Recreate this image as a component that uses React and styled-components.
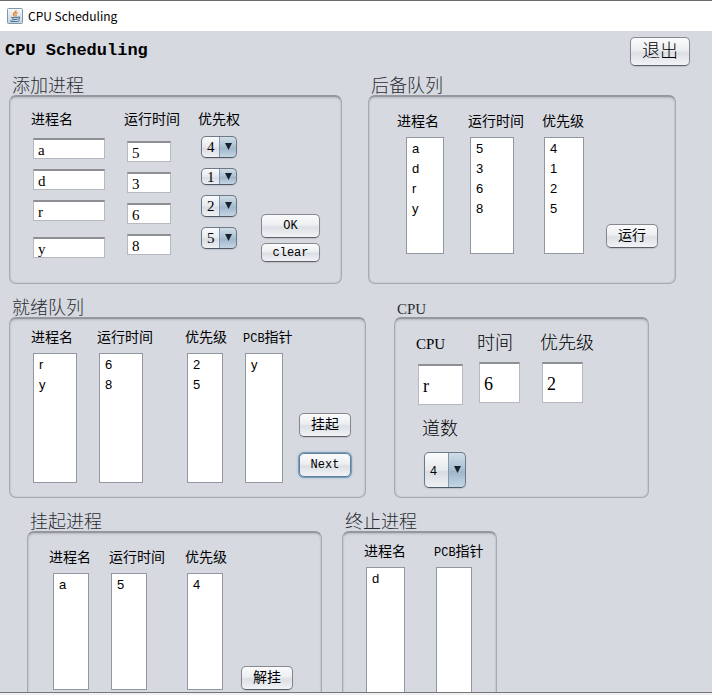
import React, { useState } from "react";
import styled, { createGlobalStyle, css } from "styled-components";

const GlobalStyle = createGlobalStyle`
  *, *::before, *::after { box-sizing: border-box; }
  body {
    margin: 0;
    overflow: hidden;
    background: #d6d9e0;
    color: #000;
    font-family: "Noto Sans CJK SC", sans-serif;
  }
  h1, h2, ul { margin: 0; padding: 0; }
  button, input, select { margin: 0; color: inherit; }
`;

const serif = css`
  font-family: "Liberation Serif", "Noto Sans CJK SC", serif;
`;

const mono = css`
  font-family: "Liberation Mono", "Noto Sans CJK SC", monospace;
`;

const Window = styled.div`
  display: flex;
  flex-direction: column;
  height: 100vh;
  border-top: 1px solid #6c6a6e;
  background: #d6d9e0;
`;

const TitleBar = styled.header`
  display: flex;
  flex: none;
  align-items: center;
  gap: 5px;
  height: 30px;
  padding-left: 7px;
  background: #fff;
  font-family: "Noto Sans CJK SC", sans-serif;
  font-size: 12px;
  line-height: 18px;
`;

const Content = styled.main`
  flex: 1;
  min-height: 0;
  overflow: hidden;
`;

const BottomEdge = styled.footer`
  flex: none;
  height: 3px;
  border-top: 1px solid #77757a;
  background: #f0f0f2;
`;

const Heading = styled.div`
  display: flex;
  align-items: flex-start;
  justify-content: space-between;
  padding: 6px 22px 9px 5px;
`;

const AppName = styled.h1`
  ${mono}
  font-size: 17px;
  font-weight: 700;
  line-height: 28px;
`;

const PanelRow = styled.div`
  display: grid;
  grid-template-columns: ${(p) => p.$columns};
  column-gap: ${(p) => p.$gap}px;
  margin-bottom: 13px;
  padding: 0 ${(p) => p.$right}px 0 ${(p) => p.$left}px;
`;

const Group = styled.section`
  display: flex;
  flex-direction: column;
  min-width: 0;
`;

const GroupTitle = styled.h2`
  height: 20px;
  padding-left: 3px;
  color: #2b2d32;
  font-size: 18px;
  font-weight: 300;
  line-height: 18px;
  white-space: nowrap;
`;

const GroupBox = styled.div`
  display: grid;
  flex: 1;
  grid-template-columns: ${(p) => p.$columns};
  min-height: ${(p) => p.$height}px;
  padding: ${(p) => p.$pad};
  border: 1px solid #a6a9b0;
  border-top: 2px solid #94979d;
  border-radius: 7px;
  box-shadow: inset 0 1px 2px #b8bbc2, inset 0 0 2px #b4b7be;
`;

const Column = styled.div`
  display: flex;
  flex-direction: column;
  align-items: flex-start;
  gap: ${(p) => p.$gap}px;
  min-width: 0;
`;

const ColumnBody = styled.div`
  display: grid;
  align-items: start;
  grid-template-rows: ${(p) => p.$rows || "auto"};
  padding-left: ${(p) => (p.$indent === undefined ? 2 : p.$indent)}px;
`;

const Caption = styled.label`
  height: 20px;
  font-size: ${(p) => (p.$large ? 18 : 14)}px;
  font-weight: ${(p) => (p.$large ? 300 : 400)};
  line-height: 18px;
  white-space: nowrap;
`;

const ListCaption = styled(Caption).attrs({ as: "span" })``;

const Latin = styled.span`
  ${(p) => (p.$large ? serif : mono)}
  font-size: ${(p) => (p.$large ? 15 : 12)}px;
  font-weight: 400;
  line-height: 1;
`;

const TextField = styled.input`
  ${serif}
  width: ${(p) => p.$width}px;
  height: ${(p) => (p.$large ? 41 : 21)}px;
  padding: 2px 4px 0;
  border: 1px solid #b6b9bf;
  border-top: 2px solid #8d8f94;
  border-radius: 0;
  outline: none;
  background: #fff;
  font-size: ${(p) => (p.$large ? 18 : 15)}px;
`;

const ListBox = styled.ul`
  width: ${(p) => p.$width}px;
  height: ${(p) => p.$height}px;
  padding: 1px 0 0 5px;
  border: 1px solid #9297a1;
  background: #fff;
  font-family: "Liberation Sans", sans-serif;
  font-size: 13px;
  line-height: 20px;
  list-style: none;
`;

const Actions = styled.div`
  display: flex;
  flex-direction: column;
  align-self: end;
  align-items: flex-start;
  gap: ${(p) => p.$gap || 0}px;
  padding-bottom: ${(p) => p.$bottom || 0}px;
`;

const Button = styled.button`
  ${mono}
  width: ${(p) => p.$width || 52}px;
  height: ${(p) => p.$height || 24}px;
  padding: 0;
  border: 1px solid #85888f;
  border-bottom-color: #5d6067;
  border-radius: 5px;
  outline: none;
  background: linear-gradient(#fbfbfc, #eceef1 45%, #dcdfe4 55%, #f1f3f6);
  box-shadow: 0 1px 1px #bfc2c9;
  font-size: ${(p) => p.$size || 12}px;
  font-weight: ${(p) => (p.$size === 18 ? 300 : 400)};
  line-height: 16px;

  ${(p) =>
    p.$active &&
    css`
      border-color: #5f7f99;
      box-shadow: 0 0 0 1px #7ba0bf, 0 0 2px 1px #8fb0ca;
    `}
`;

const SelectFrame = styled.div`
  position: relative;
  width: ${(p) => p.$width}px;
  height: ${(p) => p.$height}px;
`;

const SelectControl = styled.select`
  font-family: ${(p) => (p.$sans ? '"Noto Sans", sans-serif' : '"Liberation Serif", serif')};
  display: block;
  width: 100%;
  height: 100%;
  padding: 0 0 0 5px;
  appearance: none;
  border: 1px solid #6d7987;
  border-bottom-color: #4d5966;
  border-radius: 5px;
  outline: none;
  background:
    linear-gradient(90deg, #8298ac 1px, transparent 1px) right / 17px 100% no-repeat,
    linear-gradient(#d0dde8, #a9bfd1 50%, #9fb6c9 55%, #c3d6e5) right / 17px 100% no-repeat,
    linear-gradient(#fafbfc, #e6e9ed 50%, #d9dde2 55%, #eef0f3);
  box-shadow: 0 1px 1px #bfc2c9;
  font-size: ${(p) => (p.$sans ? 12 : 15)}px;
`;

const Arrow = styled.svg`
  position: absolute;
  top: 50%;
  right: 5px;
  width: 7px;
  height: 7px;
  margin-top: -4px;
  pointer-events: none;
`;

function JavaIcon() {
  return (
    <svg width="16" height="16" viewBox="0 0 16 16" aria-hidden="true">
      <defs>
        <linearGradient id="tile" x1="0" y1="0" x2="0" y2="1">
          <stop offset="0" stopColor="#f8f8f8" />
          <stop offset="1" stopColor="#c3d3df" />
        </linearGradient>
      </defs>
      <rect x="0.5" y="0.5" width="15" height="15" rx="1" fill="url(#tile)" stroke="#7f97aa" />
      <path d="M9 2.4C9.6 4.4 5.6 4.9 6.6 6.9 6.9 7.4 7.6 7.8 7.6 8.4" fill="none" stroke="#e0842f" strokeWidth="1.5" />
      <path d="M10.6 4.4C8.8 5.2 8.5 6 9.1 7 9.4 7.6 9 8.2 8.5 8.6" fill="none" stroke="#e0842f" strokeWidth="1.1" />
      <path d="M4.4 9.2C5.8 10 9.2 9.9 10.8 9.1M5 11C6.7 11.7 8.9 11.6 10.4 11M11 9.1C13.6 8.6 12.8 10.9 10.8 11.3M3.2 12.8C5 13.9 10.6 13.8 12.6 12.6" fill="none" stroke="#4a7192" strokeWidth="1.1" />
    </svg>
  );
}

function Panel({ title, latin, columns, height, pad, children }) {
  return (
    <Group>
      <GroupTitle>{latin ? <Latin $large>{title}</Latin> : title}</GroupTitle>
      <GroupBox $columns={columns} $height={height} $pad={pad}>
        {children}
      </GroupBox>
    </Group>
  );
}

function Select({ id, label, value, sans, width = 36, height = 22 }) {
  const [current, setCurrent] = useState(value);
  return (
    <SelectFrame $width={width} $height={height}>
      <SelectControl id={id} aria-label={label} value={current} $sans={sans} onChange={(e) => setCurrent(e.target.value)}>
        {["1", "2", "3", "4", "5"].map((n) => (
          <option key={n}>{n}</option>
        ))}
      </SelectControl>
      <Arrow viewBox="0 0 7 7" aria-hidden="true">
        <path d="M0 0H7L3.5 7Z" fill="#16222d" />
      </Arrow>
    </SelectFrame>
  );
}

function FieldColumn({ id, label, values, width, gap, rows, indent }) {
  return (
    <Column $gap={gap}>
      <Caption htmlFor={`${id}-0`}>{label}</Caption>
      <ColumnBody $rows={rows} $indent={indent}>
        {values.map((v, i) => (
          <TextField key={i} id={`${id}-${i}`} aria-label={`${label} ${i + 1}`} defaultValue={v} $width={width} />
        ))}
      </ColumnBody>
    </Column>
  );
}

function CpuField({ id, label, latin, value, width, gap }) {
  return (
    <Column $gap={gap}>
      <Caption htmlFor={id} $large>
        {latin ? <Latin $large>{label}</Latin> : label}
      </Caption>
      <ColumnBody>
        <TextField id={id} defaultValue={value} $width={width} $large />
      </ColumnBody>
    </Column>
  );
}

function ListColumn({ id, prefix, label, items, width, height, indent }) {
  return (
    <Column $gap={6}>
      <ListCaption id={id}>
        {prefix && <Latin>{prefix}</Latin>}
        {label}
      </ListCaption>
      <ColumnBody $indent={indent}>
        <ListBox aria-labelledby={id} $width={width} $height={height}>
          {items.map((item) => (
            <li key={item}>{item}</li>
          ))}
        </ListBox>
      </ColumnBody>
    </Column>
  );
}

const CpuStack = styled.div`
  display: flex;
  flex-direction: column;
  gap: 13px;
`;

const CpuFields = styled.div`
  display: grid;
  grid-template-columns: 61px 63px 1fr;
`;

const DegreeField = styled(Column)`
  padding-left: 6px;
`;

export default function App() {
  return (
    <>
      <GlobalStyle />
      <Window>
        <TitleBar>
          <JavaIcon />
          <span>CPU Scheduling</span>
        </TitleBar>
        <Content>
          <Heading>
            <AppName>CPU Scheduling</AppName>
            <Button $width={60} $height={29} $size={18}>退出</Button>
          </Heading>

          <PanelRow $columns="333fr 308fr" $gap={26} $left={9} $right={36}>
            <Panel title="添加进程" height={189} columns="93px 74px 63px 1fr" pad="12px 0 21px 21px">
              <FieldColumn id="name" label="进程名" values={["a", "d", "r", "y"]} width={72} gap={9} rows="31px 31px 37px 21px" />
              <FieldColumn id="time" label="运行时间" values={["5", "3", "6", "8"]} width={44} gap={12} rows="31px 31px 31px 21px" indent={3} />
              <Column $gap={7}>
                <Caption htmlFor="priority-1">优先权</Caption>
                <ColumnBody $rows="32px 27px 32px 22px" $indent={3}>
                  <Select id="priority-1" label="优先权 1" value="4" />
                  <Select id="priority-2" label="优先权 2" value="1" height={17} />
                  <Select id="priority-3" label="优先权 3" value="2" />
                  <Select id="priority-4" label="优先权 4" value="5" />
                </ColumnBody>
              </Column>
              <Actions $gap={5}>
                <Button $width={59}>OK</Button>
                <Button $width={59} $height={19}>clear</Button>
              </Actions>
            </Panel>
            <Panel title="后备队列" height={189} columns="71px 74px 64px 1fr" pad="14px 0 28px 28px">
              <ListColumn id="b1" label="进程名" items={["a", "d", "r", "y"]} width={38} height={117} indent={9} />
              <ListColumn id="b2" label="运行时间" items={["5", "3", "6", "8"]} width={44} height={117} />
              <ListColumn id="b3" label="优先级" items={["4", "1", "2", "5"]} width={40} height={117} />
              <Actions $bottom={7}>
                <Button $size={14}>运行</Button>
              </Actions>
            </Panel>
          </PanelRow>

          <PanelRow $columns="357fr 255fr" $gap={28} $left={9} $right={63}>
            <Panel title="就绪队列" height={181} columns="66px 88px 58px 56px 1fr" pad="8px 0 14px 21px">
              <ListColumn id="r1" label="进程名" items={["r", "y"]} width={44} height={130} />
              <ListColumn id="r2" label="运行时间" items={["6", "8"]} width={44} height={130} />
              <ListColumn id="r3" label="优先级" items={["2", "5"]} width={36} height={130} />
              <ListColumn id="r4" prefix="PCB" label="指针" items={["y"]} width={38} height={130} />
              <Actions $gap={16} $bottom={6}>
                <Button $size={14}>挂起</Button>
                <Button $active>Next</Button>
              </Actions>
            </Panel>
            <Panel title="CPU" latin height={181} columns="1fr" pad="13px 0 8px 21px">
              <CpuStack>
                <CpuFields>
                  <CpuField id="cpu" label="CPU" latin value="r" width={45} gap={12} />
                  <CpuField id="cpu-time" label="时间" value="6" width={41} gap={10} />
                  <CpuField id="cpu-priority" label="优先级" value="2" width={41} gap={10} />
                </CpuFields>
                <DegreeField $gap={14}>
                  <Caption htmlFor="degree" $large>道数</Caption>
                  <ColumnBody>
                    <Select id="degree" label="道数" value="4" width={42} height={36} sans />
                  </ColumnBody>
                </DegreeField>
              </CpuStack>
            </Panel>
          </PanelRow>

          <PanelRow $columns="295fr 155fr" $gap={20} $left={27} $right={215}>
            <Panel title="挂起进程" height={181} columns="60px 76px 56px 1fr" pad="14px 0 21px 21px">
              <ListColumn id="s1" label="进程名" items={["a"]} width={36} height={117} indent={4} />
              <ListColumn id="s2" label="运行时间" items={["5"]} width={36} height={117} />
              <ListColumn id="s3" label="优先级" items={["4"]} width={36} height={117} />
              <Actions>
                <Button $size={14}>解挂</Button>
              </Actions>
            </Panel>
            <Panel title="终止进程" height={181} columns="70px 1fr" pad="8px 0 12px 21px">
              <ListColumn id="t1" label="进程名" items={["d"]} width={39} height={130} />
              <ListColumn id="t2" prefix="PCB" label="指针" items={[]} width={36} height={130} />
            </Panel>
          </PanelRow>
        </Content>
        <BottomEdge />
      </Window>
    </>
  );
}
